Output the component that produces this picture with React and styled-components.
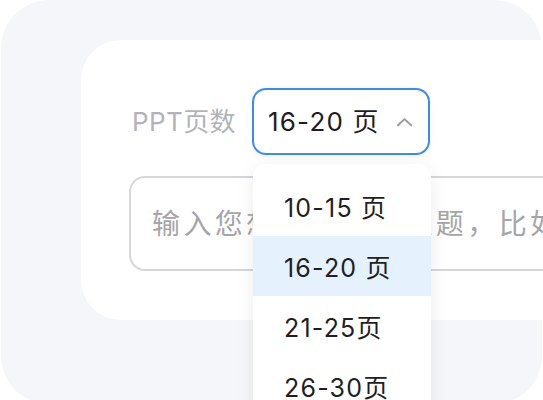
import { useState } from "react"
import styled, { createGlobalStyle } from "styled-components"

const GlobalStyle = createGlobalStyle`
  html, body {
    margin: 0;
    padding: 0;
    background: #ffffff;
    overflow: hidden;
  }
  body {
    font-family: Inter, "Noto Sans CJK SC", "Noto Sans", sans-serif;
  }
`

const options = ["10-15 页", "16-20 页", "21-25页", "26-30页"]

const App = () => {
  const [selected, setSelected] = useState(1)
  return (
    <>
      <GlobalStyle />
      <Backdrop>
        <Card>
          <Row>
            <Label>PPT页数</Label>
            <SelectWrap>
              <SelectBox>
                <SelectValue>{options[selected]}</SelectValue>
                <Chevron viewBox="0 0 18 10">
                  <path d="M2 8.5 L9 2 L16 8.5" />
                </Chevron>
              </SelectBox>
              <Menu>
                {options.map((opt, i) => (
                  <MenuItem key={opt} active={i === selected} onClick={() => setSelected(i)}>
                    {opt}
                  </MenuItem>
                ))}
              </Menu>
            </SelectWrap>
          </Row>
          <TopicInput placeholder="输入您想要的PPT主题，比如" />
        </Card>
      </Backdrop>
    </>
  )
}

const Backdrop = styled.div`
  width: 541px;
  height: 404px;
  margin-left: 1px;
  border-radius: 48px;
  background: #f5f6fa;
  padding: 40px 0 0 80px;
  box-sizing: border-box;
`
const Card = styled.div`
  width: 520px;
  height: 280px;
  background: #ffffff;
  border-radius: 40px 0 0 40px;
  padding: 48px 0 0 48px;
  box-sizing: border-box;
  display: flex;
  flex-direction: column;
  gap: 21px;
`
const Row = styled.div`
  display: flex;
  align-items: center;
  gap: 15px;
  margin-left: 3px;
`
const Label = styled.span`
  width: 105px;
  font-size: 26px;
  letter-spacing: 0.4px;
  color: #b2b3b8;
  line-height: 1;
  margin-top: 1px;
  white-space: nowrap;
`
const SelectWrap = styled.div`
  position: relative;
`
const SelectBox = styled.div`
  width: 178px;
  height: 67px;
  box-sizing: border-box;
  border: 2px solid #3a8bf6;
  border-radius: 14px;
  display: flex;
  align-items: center;
  justify-content: space-between;
  padding: 0 15px 0 14px;
  background: #ffffff;
  box-shadow: 0 2px 10px rgba(0, 0, 0, 0.04);
`
const SelectValue = styled.span`
  font-size: 26px;
  letter-spacing: 1.2px;
  color: #1d1d1f;
  line-height: 1;
  white-space: pre;
`
const Chevron = styled.svg`
  width: 17px;
  height: 10px;
  fill: none;
  stroke: #9a9a9e;
  stroke-width: 2;
  stroke-linecap: round;
  stroke-linejoin: round;
`
const Menu = styled.div`
  position: absolute;
  top: 76px;
  left: 1px;
  width: 178px;
  padding-top: 12px;
  background: #ffffff;
  border-radius: 12px;
  box-shadow: 0 4px 18px rgba(0, 0, 0, 0.08);
  z-index: 2;
`
const MenuItem = styled.div`
  height: 60px;
  display: flex;
  align-items: center;
  padding-left: 31px;
  font-size: 25px;
  letter-spacing: 1.2px;
  color: #1f1f22;
  background: ${props => (props.active ? "#e5f1fd" : "#ffffff")};
  cursor: pointer;
  white-space: pre;
`
const TopicInput = styled.input`
  width: 480px;
  height: 95px;
  box-sizing: border-box;
  border: 2px solid #d6d6da;
  border-right: none;
  border-radius: 16px 0 0 16px;
  padding: 0 0 0 21px;
  font-family: inherit;
  font-size: 28px;
  letter-spacing: 3.4px;
  outline: none;
  &::placeholder {
    color: #a5a5a8;
  }
`

export default App
